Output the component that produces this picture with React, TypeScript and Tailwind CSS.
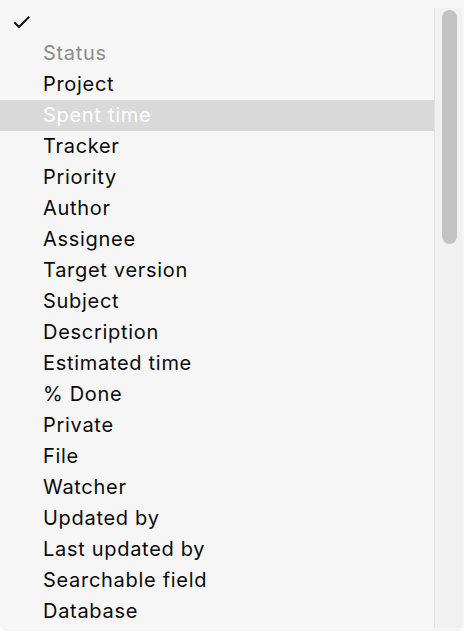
import React from "react";

const items: { label: string; kind?: "muted" | "active" }[] = [
  { label: "Status", kind: "muted" },
  { label: "Project" },
  { label: "Spent time", kind: "active" },
  { label: "Tracker" },
  { label: "Priority" },
  { label: "Author" },
  { label: "Assignee" },
  { label: "Target version" },
  { label: "Subject" },
  { label: "Description" },
  { label: "Estimated time" },
  { label: "% Done" },
  { label: "Private" },
  { label: "File" },
  { label: "Watcher" },
  { label: "Updated by" },
  { label: "Last updated by" },
  { label: "Searchable field" },
  { label: "Database" },
];

export default function App() {
  return (
    <div className="w-[464px] h-[636px] bg-white" style={{ fontFamily: 'Inter, "Noto Sans", sans-serif' }}>
      <div className="w-[464px] h-[631px] bg-[#f6f6f6] rounded-b-[6px] flex">
        <div className="w-[434px] pt-[7px] flex flex-col">
          <div className="h-[31px] flex items-center pl-[14px]">
            <svg width="16" height="14" viewBox="0 0 16 14" className="block">
              <polyline points="1,7 5,11 14.5,1.5" fill="none" stroke="#111" strokeWidth="2" strokeLinecap="square" />
            </svg>
          </div>
          {items.map((it) => (
            <div
              key={it.label}
              className={
                it.kind === "active"
                  ? "h-[31px] flex items-center pl-[43px] pb-[2px] text-[20px] tracking-[0.7px] leading-none bg-[#d9d9d9] text-white"
                  : it.kind === "muted"
                  ? "h-[31px] flex items-center pl-[43px] pb-[2px] text-[20px] tracking-[0.7px] leading-none text-[#8c8c8c]"
                  : "h-[31px] flex items-center pl-[43px] pb-[2px] text-[20px] tracking-[0.7px] leading-none text-[#0a0a0a]"
              }
            >
              {it.label}
            </div>
          ))}
        </div>
        <div className="w-[28px] mt-[8px] h-[620px] bg-[#f1f1f1] border-l border-[#e2e2e2] pl-[7px] pt-[2px]">
          <div className="w-[15px] h-[234px] rounded-full bg-[#c2c2c2]" />
        </div>
      </div>
    </div>
  );
}
